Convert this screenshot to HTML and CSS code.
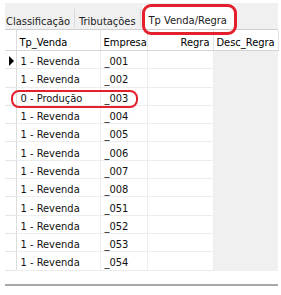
FILE: index.html
```html
<!DOCTYPE html>
<html lang="pt">
<head>
    <meta charset="UTF-8">
    <title>Tp Venda/Regra</title>
    <link rel="stylesheet" href="styles.css">
</head>
<body>
    <div class="panel">
        <div class="tabs">
            <div class="tab">Classificação</div>
            <div class="tab">Tributações</div>
            <div class="tab active">Tp Venda/Regra</div>
        </div>

        <table class="grid">
            <colgroup>
                <col class="c-ind">
                <col class="c-tipo">
                <col class="c-emp">
                <col class="c-regra">
                <col class="c-desc">
            </colgroup>
            <thead>
                <tr>
                    <th class="ind"></th>
                    <th>Tp_Venda</th>
                    <th>Empresa</th>
                    <th class="right">Regra</th>
                    <th>Desc_Regra</th>
                </tr>
            </thead>
            <tbody>
                <tr><td class="ind"><span class="arrow"></span></td><td>1 - Revenda</td><td>_001</td><td></td><td class="desc"></td></tr>
                <tr><td class="ind"></td><td>1 - Revenda</td><td>_002</td><td></td><td class="desc"></td></tr>
                <tr><td class="ind"></td><td>0 - Produção</td><td>_003</td><td></td><td class="desc"></td></tr>
                <tr><td class="ind"></td><td>1 - Revenda</td><td>_004</td><td></td><td class="desc"></td></tr>
                <tr><td class="ind"></td><td>1 - Revenda</td><td>_005</td><td></td><td class="desc"></td></tr>
                <tr><td class="ind"></td><td>1 - Revenda</td><td>_006</td><td></td><td class="desc"></td></tr>
                <tr><td class="ind"></td><td>1 - Revenda</td><td>_007</td><td></td><td class="desc"></td></tr>
                <tr><td class="ind"></td><td>1 - Revenda</td><td>_008</td><td></td><td class="desc"></td></tr>
                <tr><td class="ind"></td><td>1 - Revenda</td><td>_051</td><td></td><td class="desc"></td></tr>
                <tr><td class="ind"></td><td>1 - Revenda</td><td>_052</td><td></td><td class="desc"></td></tr>
                <tr><td class="ind"></td><td>1 - Revenda</td><td>_053</td><td></td><td class="desc"></td></tr>
                <tr><td class="ind"></td><td>1 - Revenda</td><td>_054</td><td></td><td class="desc"></td></tr>
            </tbody>
        </table>

        <div class="bottom-line"></div>

        <!-- red marks drawn over the screenshot -->
        <div class="mark mark-tab"></div>
        <div class="mark mark-row"></div>
    </div>
</body>
</html>
```

FILE: styles.css
```css
body {
    margin: 0;
    background: #fff;
    font-family: "DejaVu Sans Condensed", "DejaVu Sans", sans-serif;
    font-size: 11px;
    color: #000;
}
.panel {
    position: relative;
    width: 273px;
    margin-left: 5px;
    padding-top: 3px;
    height: 292px;
}
.tabs {
    display: flex;
    align-items: stretch;
    height: 27px;
    background: #f0f0f0;
    border-bottom: 1px solid #cfcfcf;
    box-sizing: border-box;
}
.tab {
    display: flex;
    align-items: center;
    padding: 6px 4px 0 1px;
    border-right: 1px solid #dadada;
    margin-top: 6px;
    margin-bottom: 2px;
    color: #222;
}
.tab:nth-child(2) {
    padding-left: 4px;
}
.tab.active {
    background: #fff;
    border-right: none;
    margin: 2px 0 0 2px;
    padding: 8px 8px 2px 6px;
}
.grid {
    border-collapse: collapse;
    table-layout: fixed;
    width: 273px;
}
.c-ind { width: 11px; }
.c-tipo { width: 84px; }
.c-emp { width: 47px; }
.c-regra { width: 66px; }
.c-desc { width: 65px; }
.grid th {
    height: 15px;
    font-weight: normal;
    text-align: left;
    padding: 5px 3px 0;
    border-right: 1px solid #e3e3e3;
    border-bottom: 1px solid #d6d6d6;
    white-space: nowrap;
    overflow: hidden;
}
.grid th.right {
    text-align: right;
}
.grid td {
    height: 13.3px;
    padding: 4px 0 0 4px;
    border-right: 1px solid #ededed;
    border-bottom: 1px solid #ededed;
    white-space: nowrap;
    color: #111;
}
.grid td.ind,
.grid th.ind {
    padding: 0;
    border-right: 1px solid #dcdcdc;
}
.grid td.ind {
    border-bottom-color: #e6e6e6;
}
.grid td.desc {
    background: #f0f0f0;
    border-right: none;
    border-bottom-color: #f0f0f0;
}
.arrow {
    display: block;
    width: 0;
    height: 0;
    margin: 3px 0 0 4px;
    border-top: 5px solid transparent;
    border-bottom: 5px solid transparent;
    border-left: 5px solid #000;
}
.bottom-line {
    margin-top: 13px;
    height: 2px;
    background: #a8a8a8;
}
.mark {
    position: absolute;
    border: 3px solid #e4202c;
    border-radius: 9px;
}
.mark-tab {
    left: 137px;
    top: 4px;
    width: 89px;
    height: 25px;
}
.mark-row {
    left: 6px;
    top: 90px;
    width: 123px;
    height: 14px;
    border-width: 2.5px;
    border-radius: 8px;
}
```
